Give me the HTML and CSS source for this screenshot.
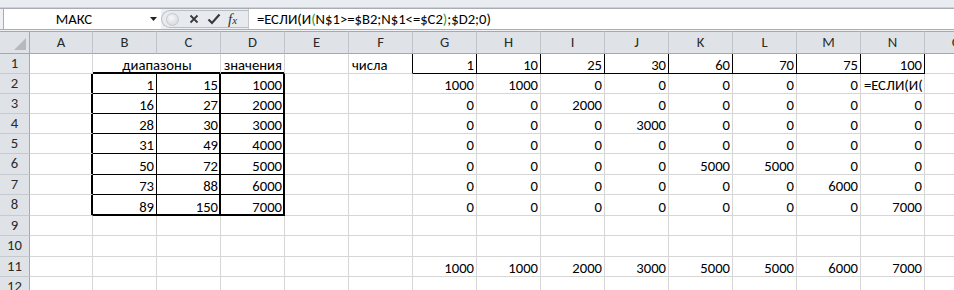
FILE: index.html
```html
<!DOCTYPE html>
<html lang="ru">
<head>
    <meta charset="UTF-8">
    <title>Лист1</title>
    <link rel="stylesheet" href="styles.css">
</head>
<body>

<div class="ribbon"></div>
<div class="fbar">
    <div class="namebox">
        <span class="name">МАКС</span>
        <svg class="drop" width="7" height="4" viewBox="0 0 7 4"><path d="M0 0h7L3.5 4z" fill="#222"/></svg>
    </div>
    <div class="fbtns">
        <span class="grip"></span>
        <svg class="ico" width="12" height="12" viewBox="0 0 12 12"><path d="M2.5 2.5l7 7M9.5 2.5l-7 7" stroke="#3a3a3a" stroke-width="1.8"/></svg>
        <svg class="ico" width="14" height="12" viewBox="0 0 14 12"><path d="M1.5 6.5l3.5 3.5 7.5-8.5" stroke="#3a3a3a" stroke-width="2.2" fill="none"/></svg>
        <span class="fx"><i>f</i><span>x</span></span>
    </div>
    <div class="formula">=ЕСЛИ(И<span class="par">(</span>N$1&gt;=$B2;N$1&lt;=$C2<span class="par">)</span>;$D2;0)</div>
</div>
<div class="gap"></div>
<div class="sheet" id="sheet"></div>

<script>
    const letters = ['A','B','C','D','E','F','G','H','I','J','K','L','M','N','O'];
    const heights = [23, 20, 20, 20, 20, 20, 21, 20, 21, 20, 21, 20, 20];

    const cells = {
        F1: 'числа', D1: 'значения',
        B2: 1, C2: 15, D2: 1000,
        B3: 16, C3: 27, D3: 2000,
        B4: 28, C4: 30, D4: 3000,
        B5: 31, C5: 49, D5: 4000,
        B6: 50, C6: 72, D6: 5000,
        B7: 73, C7: 88, D7: 6000,
        B8: 89, C8: 150, D8: 7000,
        N2: '=ЕСЛИ(И('
    };
    const chisla = [1, 10, 25, 30, 60, 70, 75, 100];
    const grid = [
        [1000, 1000, 0, 0, 0, 0, 0, null],
        [0, 0, 2000, 0, 0, 0, 0, 0],
        [0, 0, 0, 3000, 0, 0, 0, 0],
        [0, 0, 0, 0, 0, 0, 0, 0],
        [0, 0, 0, 0, 5000, 5000, 0, 0],
        [0, 0, 0, 0, 0, 0, 6000, 0],
        [0, 0, 0, 0, 0, 0, 0, 7000]
    ];
    const totals = [1000, 1000, 2000, 3000, 5000, 5000, 6000, 7000];
    chisla.forEach((v, i) => cells[letters[6 + i] + '1'] = v);
    grid.forEach((row, r) => row.forEach((v, i) => {
        if (v !== null) cells[letters[6 + i] + (r + 2)] = v;
    }));
    totals.forEach((v, i) => cells[letters[6 + i] + '11'] = v);

    // right edge of column c (A = 1)
    function vEdge(r, c) {
        if (r >= 2 && r <= 8 && (c === 1 || c === 3 || c === 4)) return 2;
        if (r >= 2 && r <= 8 && c === 2) return 1;
        if (r === 1 && c >= 6 && c <= 14) return 1;
        return 0;
    }
    // bottom edge of row r
    function hEdge(r, c) {
        if ((r === 1 || r === 8) && c >= 2 && c <= 4) return 2;
        if (r >= 2 && r <= 7 && c >= 2 && c <= 4) return 1;
        if (r === 1 && c >= 7 && c <= 14) return 1;
        return 0;
    }

    const sheet = document.getElementById('sheet');
    sheet.style.gridTemplateRows = heights.map(h => h + 'px').join(' ');

    function add(cls, text) {
        const d = document.createElement('div');
        d.className = cls;
        if (text !== undefined) d.textContent = text;
        sheet.appendChild(d);
        return d;
    }

    const corner = add('corner');
    corner.innerHTML = '<svg width="12" height="12" viewBox="0 0 12 12"><path d="M12 0v12H0z" fill="#b6bac0"/></svg>';
    letters.forEach(l => add('colhead', l));

    for (let r = 1; r <= 12; r++) {
        add('rowhead', r);
        for (let c = 1; c <= 15; c++) {
            const key = letters[c - 1] + r;
            const v = cells[key];
            if (r === 1 && c === 2) {
                add('cell txt center span2 hb2', 'диапазоны');
                c++;
                continue;
            }
            let cls = 'cell';
            if (typeof v === 'number') cls += ' num';
            else if (v !== undefined) cls += ' txt';
            const ve = vEdge(r, c), he = hEdge(r, c);
            if (ve) cls += ' vr' + ve;
            if (he) cls += ' hb' + he;
            add(cls, v === undefined ? '' : v);
        }
    }
</script>

</body>
</html>
```

FILE: styles.css
```css
body {
    margin: 0;
    width: 954px;
    height: 290px;
    overflow: hidden;
    background-color: #fff;
    font-family: Carlito, Calibri, "Liberation Sans", sans-serif;
    font-size: 14.67px;
    color: #000;
}
.ribbon {
    height: 7px;
    background-color: #e9ecf0;
    border-bottom: 1px solid #ccd1d7;
}
.fbar {
    display: flex;
    height: 20px;
    border-top: 1px solid #a8adb4;
    border-bottom: 1px solid #a8adb4;
    padding-left: 3px;
    background-color: #eef0f3;
}
.namebox {
    width: 157px;
    display: flex;
    align-items: center;
    background-color: #fff;
    border-left: 1px solid #a8adb4;
}
.name {
    width: 140px;
    text-align: center;
}
.drop {
    margin-left: 6px;
}
.fbtns {
    width: 82px;
    margin: 1px 0;
    display: flex;
    align-items: center;
    gap: 7px;
    padding-left: 4px;
    background-color: #e7eaee;
    border: 1px solid #b9bec5;
    border-right: none;
    border-radius: 9px 0 0 9px;
}
.grip {
    width: 11px;
    height: 11px;
    border-radius: 50%;
    background: radial-gradient(circle at 40% 35%, #f6f7f8, #cfd3d8);
    border: 1px solid #c4c8cd;
    margin-right: 2px;
}
.fx {
    font-family: "Liberation Serif", serif;
    font-size: 15px;
    color: #333;
    margin-left: 0;
}
.fx span {
    font-size: 11px;
    font-style: italic;
}
.formula {
    flex: 1;
    background-color: #fff;
    border-left: 1px solid #c3c7cc;
    padding-left: 8px;
    line-height: 20px;
    white-space: nowrap;
}
.par {
    color: #2c9a48;
}
.gap {
    height: 1px;
    background-color: #eef0f3;
}
.sheet {
    display: grid;
    grid-template-columns: 30px 63px repeat(14, 64px);
}
.corner, .colhead, .rowhead, .cell {
    box-sizing: border-box;
    border-right: 1px solid #d6d6d6;
    border-bottom: 1px solid #d6d6d6;
    white-space: nowrap;
    overflow: hidden;
}
.corner {
    background-color: #dfe3e8;
    border-top: 1px solid #a3a9b1;
    border-right-color: #a3a9b1;
    border-bottom-color: #a3a9b1;
    display: flex;
    align-items: flex-end;
    justify-content: flex-end;
    padding: 0 3px 3px 0;
}
.colhead {
    background-color: #dfe3e8;
    border-top: 1px solid #a3a9b1;
    border-right-color: #bfc4ca;
    border-bottom-color: #a3a9b1;
    text-align: center;
    line-height: 21px;
    color: #2a2a2a;
}
.rowhead {
    background-color: #dfe3e8;
    border-right-color: #a3a9b1;
    border-bottom-color: #c5cad0;
    text-align: center;
    line-height: 19px;
    color: #2a2a2a;
}
.cell {
    display: flex;
    align-items: flex-end;
    line-height: 15px;
    padding: 0 2px 0 3px;
}
.num {
    justify-content: flex-end;
}
.center {
    justify-content: center;
}
.span2 {
    grid-column: span 2;
}
.vr1, .vr2 {
    border-right-color: #000;
}
.hb1, .hb2 {
    border-bottom-color: #000;
}
.vr2 {
    box-shadow: inset -1px 0 0 #000;
}
.hb2 {
    box-shadow: inset 0 -1px 0 #000;
}
.vr2.hb2 {
    box-shadow: inset -1px 0 0 #000, inset 0 -1px 0 #000;
}
```
